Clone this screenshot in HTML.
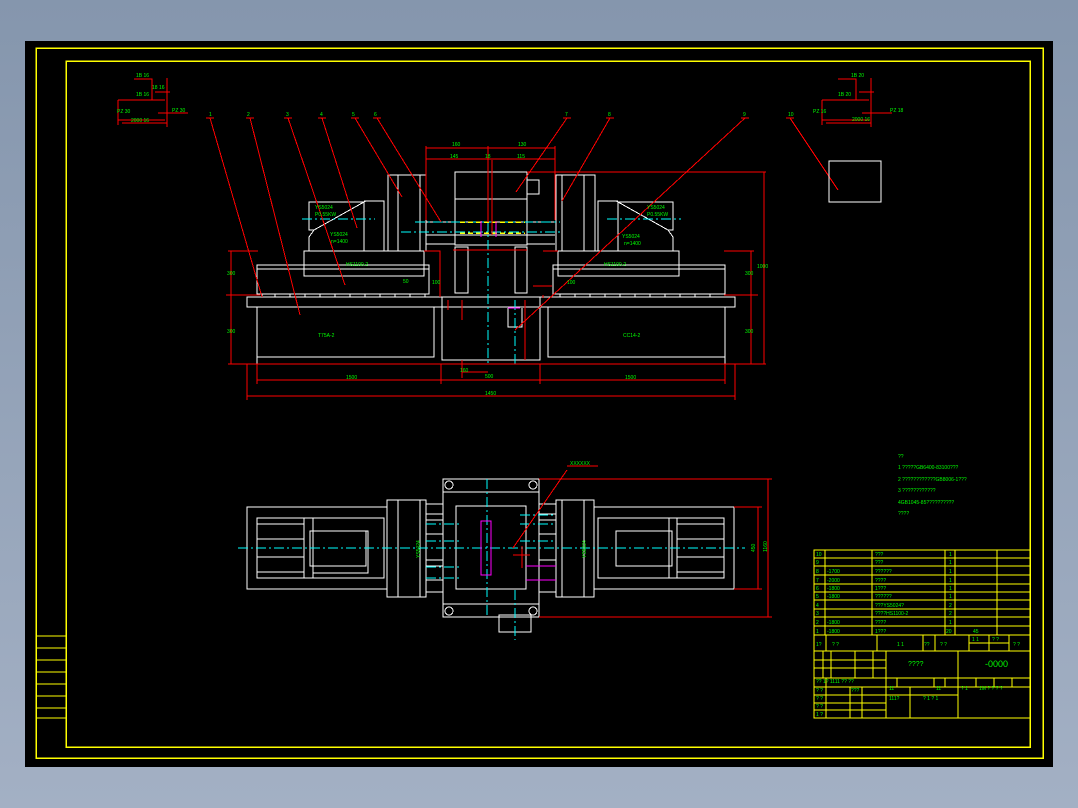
<!DOCTYPE html>
<html><head><style>
html,body{margin:0;padding:0;width:1078px;height:808px;overflow:hidden;background:#8a9bb1;}
svg{display:block}
text{font-family:"Liberation Sans",sans-serif;fill:#00ff00;font-size:5px}
</style></head><body>
<svg width="1078" height="808" viewBox="0 0 1078 808" xmlns="http://www.w3.org/2000/svg" shape-rendering="crispEdges">
<defs><linearGradient id="bg" x1="0" y1="0" x2="0" y2="1"><stop offset="0" stop-color="#8596ad"/><stop offset="1" stop-color="#a3b0c4"/></linearGradient></defs>
<rect width="1078" height="808" fill="url(#bg)"/>
<rect x="25" y="41" width="1028" height="726" fill="#000"/>
<g fill="none" stroke="#ffff00" stroke-width="1.5">
<rect x="36" y="48" width="1007" height="710"/>
<rect x="66" y="61" width="964" height="686"/>
</g>
<g fill="none" stroke="#ffff00" stroke-width="1">
<path d="M36 636H66M36 648H66M36 660H66M36 672H66M36 684H66M36 696H66M36 708H66M36 718H66"/>
</g>
<g fill="none" stroke="#ff0000" stroke-width="1">
<path d="M134 79H152V100M118 100H165M118 100V125M118 120H165M167 78V127M155 92H170M158 113H188M122 123H167"/>
<path d="M838 79H856V100M822 100H869M822 100V125M822 120H869M871 78V127M859 92H874M862 113H892M826 123H871"/>
</g>
<text x="136" y="77">1B 16</text><text x="136" y="96">1B 16</text><text x="117" y="113">PZ 30</text><text x="172" y="112">PZ 30</text><text x="131" y="122">2000 16</text><text x="152" y="89">18 16</text>
<text x="851" y="77">1B 20</text><text x="838" y="96">1B 20</text><text x="813" y="113">PZ 16</text><text x="890" y="112">PZ 18</text><text x="852" y="121">2000 16</text>

<g fill="none" stroke="#ffffff" stroke-width="1">
<rect x="247" y="297" width="488" height="10"/>
<path d="M257 307V364H725V307"/>
<rect x="257" y="307" width="177" height="50"/>
<rect x="548" y="307" width="177" height="50"/>
<path d="M442 297V360H540V297M442 360H540"/>
<rect x="257" y="265" width="172" height="29"/><path d="M257 269H429"/>
<rect x="553" y="265" width="172" height="29"/><path d="M553 269H725"/>
<path d="M262 294V297M275 294V297M290 294V297M305 294V297M320 294V297M335 294V297M350 294V297M365 294V297M380 294V297M395 294V297M410 294V297M425 294V297M560 294V297M575 294V297M590 294V297M605 294V297M620 294V297M635 294V297M650 294V297M665 294V297M680 294V297M695 294V297M710 294V297"/>
<rect x="304" y="251" width="120" height="25"/>
<rect x="558" y="251" width="121" height="25"/>
<path d="M309 251V237L314 230H309V202H364L314 230M364 202V251M364 201H384V251"/>
<path d="M673 251V237L668 230H673V202H618L668 230M618 202V251M618 201H598V251"/>
<rect x="388" y="175" width="38" height="76"/><path d="M398 175V251M420 175V251"/>
<rect x="556" y="175" width="39" height="76"/><path d="M562 175V251M584 175V251"/>
<rect x="455" y="172" width="72" height="73"/><path d="M455 199H527"/>
<rect x="455" y="247" width="13" height="46"/><rect x="515" y="247" width="12" height="46"/>
<path d="M426 222H555M426 235H555M426 244H455M527 244H555"/>
<rect x="527" y="180" width="12" height="14"/>
<path d="M508 308V327H522V308"/>
</g>
<g stroke="#00ffff" stroke-width="1" fill="none" stroke-dasharray="10 3 2 3">
<path d="M488 150V365M302 219H375M607 219H681M415 222H560M401 232H561M515 300V365"/>
</g>
<g stroke="#ffff00" stroke-width="1.5" fill="none" stroke-dasharray="5 3"><path d="M460 222H525M460 233H525"/></g>
<path d="M481 221V237M496 221V237" stroke="#ff00ff" fill="none"/>
<path d="M508 308H520" stroke="#ff00ff"/>
<g fill="none" stroke="#ff0000" stroke-width="1">
<path d="M527 172H766M764 172V364M228 364H766M231 251V364M751 251V364M228 251H258M724 251H754"/>
<path d="M257 380H725M257 364V384M441 364V384M540 364V384M725 364V384M247 396H735M247 364V400M735 364V400"/>
<path d="M426 148H555M426 159H555M426 146V220M555 146V220M488 146V222M492 160V235"/>
<path d="M424 251H440V283M543 251H558M440 254V297M448 300V310M453 250H527M462 300V320M533 286H552M543 295V298M226 295H260M724 295H758M462 360V378M525 300V360M462 372H488"/>
<path d="M210 118L262 297M250 118L300 315M288 118L345 285M322 118L357 228M355 118L402 197M377 118L441 222M567 118L516 192M610 118L562 201M745 118L515 330M790 118L838 190"/>
<path d="M206 118H214M246 118H254M284 118H292M318 118H326M351 118H359M373 118H381M563 118H571M606 118H614M741 118H749M786 118H794"/>
</g>
<g>
<text x="209" y="116">1</text><text x="247" y="116">2</text><text x="286" y="116">3</text><text x="320" y="116">4</text><text x="352" y="116">5</text><text x="374" y="116">6</text><text x="565" y="116">7</text><text x="608" y="116">8</text><text x="743" y="116">9</text><text x="788" y="116">10</text>
<text x="452" y="146">160</text><text x="518" y="146">130</text><text x="450" y="158">145</text><text x="517" y="158">115</text><text x="485" y="158">18</text>
<text x="315" y="209">YS5024</text><text x="315" y="216">P0.55KW</text><text x="330" y="236">YS5024</text><text x="331" y="243">n=1400</text>
<text x="647" y="209">YS5024</text><text x="647" y="216">P0.55KW</text><text x="622" y="238">YS5024</text><text x="624" y="245">n=1400</text>
<text x="346" y="266">HS1100-2</text><text x="604" y="266">HS1100-2</text>
<text x="318" y="337">T75A-2</text><text x="623" y="337">CC14-2</text>
<text x="346" y="379">1500</text><text x="625" y="379">1500</text><text x="485" y="378">500</text><text x="460" y="372">160</text><text x="485" y="395">1450</text>
<text x="227" y="275">300</text><text x="227" y="333">300</text><text x="745" y="275">300</text><text x="745" y="333">300</text><text x="757" y="268">1000</text>
<text x="403" y="283">50</text><text x="432" y="284">100</text><text x="567" y="284">100</text>
</g>

<rect x="829" y="161" width="52" height="41" fill="none" stroke="#fff"/>

<g fill="none" stroke="#ffffff" stroke-width="1">
<rect x="247" y="507" width="140" height="82"/>
<rect x="257" y="518" width="127" height="60"/>
<path d="M257 524H304M257 539H304M257 557H304M257 572H304M304 518V578M313 518V578M313 531H368V573H313"/>
<rect x="310" y="531" width="56" height="35"/>
<rect x="387" y="500" width="39" height="97"/><path d="M398 500V597M420 500V597"/>
<rect x="443" y="479" width="96" height="138"/><path d="M443 492H539M443 604H539"/>
<rect x="456" y="506" width="70" height="83"/>
<rect x="499" y="615" width="32" height="17"/>
<path d="M426 504H443M426 592H443M539 504H556M539 592H556M426 514H443M426 520H443M426 534H443M426 560H443M426 566H443M426 580H443M539 514H556M539 520H556M539 534H556M539 560H556M539 566H556M539 580H556"/>
<rect x="556" y="500" width="38" height="97"/><path d="M562 500V597M584 500V597"/>
<rect x="594" y="507" width="140" height="82"/>
<rect x="598" y="518" width="126" height="60"/>
<path d="M677 524H724M677 539H724M677 557H724M677 572H724M669 518V578M677 518V578"/>
<rect x="616" y="531" width="56" height="35"/>
<circle cx="449" cy="485" r="4"/><circle cx="533" cy="485" r="4"/><circle cx="449" cy="611" r="4"/><circle cx="533" cy="611" r="4"/>
</g>
<g stroke="#00ffff" fill="none" stroke-dasharray="10 3 2 3">
<path d="M238 548H745M487 479V617M515 590V640M426 524H460M426 541H460M426 567H460M426 578H460M520 524H556M520 541H556M520 515H556"/>
</g>
<rect x="481" y="521" width="10" height="54" fill="none" stroke="#ff00ff"/>
<path d="M526 566H556M526 580H556" stroke="#ff00ff"/>
<g fill="none" stroke="#ff0000" stroke-width="1">
<path d="M539 479H772M768 479V617M539 617H772M734 507H762M758 507V589M734 589H762M522 546V568M513 555H530M513 548L567 470M567 466H598"/>
</g>
<text x="405" y="567" transform="rotate(-90 408 555)">YS5024</text>
<text x="571" y="567" transform="rotate(-90 574 555)">YS5024</text>
<text x="748" y="551" transform="rotate(-90 752 548)">450</text>
<text x="760" y="551" transform="rotate(-90 764 548)">1160</text>
<text x="570" y="465">XXXXXX</text>

<g><text x="898" y="458">??</text><text x="898" y="469">1 ?????GB6400-83100???</text><text x="898" y="481">2 ????????????GB8006-1???</text><text x="898" y="492">3 ????????????</text><text x="898" y="504">4GB1045-85??????????</text><text x="898" y="515">????</text></g>

<g fill="none" stroke="#ffff00" stroke-width="1">
<rect x="814" y="550" width="216" height="168"/>
<path d="M814 558H1030M814 566H1030M814 575H1030M814 584H1030M814 592H1030M814 600H1030M814 609H1030M814 617H1030M814 626H1030M814 635H1030"/>
<path d="M825 550V635M872 550V635M945 550V635M955 550V635M997 550V635"/>
<path d="M814 651H1030M826 635V651M877 635V651M923 635V651M935 635V651M969 635V651M989 635V651M1009 635V651M969 643H1009"/>
<path d="M814 660H886M814 668H886M814 678H1030M814 687H1030M814 695H886M814 703H886M814 710H886M823 651V678M831 651V678M855 651V678M873 651V678M886 651V718M958 651V718M826 678V718M850 687V718M862 687V718M897 678V687M934 678V687M945 678V687M976 678V687M994 678V687M1012 678V687M886 695H958M910 687V718"/>
</g>
<g>
<text x="816" y="556">10</text><text x="875" y="556">???</text><text x="949" y="556">1</text>
<text x="816" y="564">9</text><text x="875" y="564">???</text><text x="949" y="564">1</text>
<text x="816" y="573">8</text><text x="827" y="573">-1700</text><text x="875" y="573">??????</text><text x="949" y="573">1</text>
<text x="816" y="582">7</text><text x="827" y="582">-2000</text><text x="875" y="582">????</text><text x="949" y="582">1</text>
<text x="816" y="590">6</text><text x="827" y="590">-1800</text><text x="875" y="590">1???</text><text x="949" y="590">1</text>
<text x="816" y="598">5</text><text x="827" y="598">-1800</text><text x="875" y="598">??????</text><text x="949" y="598">1</text>
<text x="816" y="607">4</text><text x="875" y="607">???YS5024?</text><text x="949" y="607">2</text>
<text x="816" y="615">3</text><text x="875" y="615">????HS1100-2</text><text x="949" y="615">2</text>
<text x="816" y="624">2</text><text x="827" y="624">-1800</text><text x="875" y="624">????</text><text x="949" y="624">1</text>
<text x="816" y="633">1</text><text x="827" y="633">-1800</text><text x="875" y="633">1???</text><text x="946" y="633">20</text><text x="973" y="633">45</text>
<text x="816" y="646">1?</text><text x="832" y="646">?   ?</text><text x="897" y="646">1   1</text><text x="924" y="646">??</text><text x="940" y="646">?   ?</text><text x="972" y="641">1  1</text><text x="992" y="641">? ?</text><text x="1013" y="646">? ?</text>
<text x="908" y="666" style="font-size:7px">????</text><text x="985" y="667" style="font-size:9px">-0000</text>
<text x="816" y="683">??  1?  1111  ??  ??</text><text x="889" y="690">11</text><text x="936" y="690">11</text><text x="961" y="690">? 1</text><text x="979" y="690">1M  ?  ?  ?  ?</text>
<text x="816" y="692">? ?</text><text x="851" y="692">???</text><text x="816" y="700">? ?</text><text x="816" y="708">? ?</text><text x="816" y="716">1 ?</text>
<text x="889" y="700">111?</text><text x="923" y="700">? 1 ? 1</text>
</g>
</svg>
</body></html>
